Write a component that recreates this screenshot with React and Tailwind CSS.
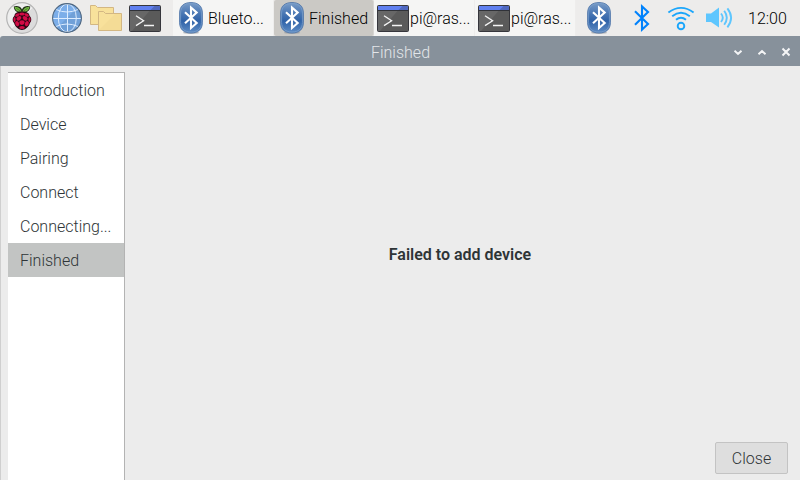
const font = 'font-[Roboto,"Liberation_Sans",sans-serif]';

function Raspberry() {
  return (
    <svg width="32" height="32" viewBox="0 0 32 32" className="block shrink-0">
      <defs>
        <linearGradient id="disc" x1="0" y1="0" x2="1" y2="1">
          <stop offset="0.5" stopColor="#eeeeee" />
          <stop offset="0.5" stopColor="#dcdcdc" />
        </linearGradient>
      </defs>
      <circle cx="16" cy="16" r="15.3" fill="url(#disc)" stroke="#b4b4b4" strokeWidth="1.2" />
      <path d="M7.8 4.6C10.5 3.4 14.5 4.2 16 7.4C17.5 4.2 21.5 3.4 24.2 4.6C24 8 22.2 11 16 11C9.8 11 8 8 7.8 4.6Z" fill="#1d2b14" />
      <path d="M8.5 5.1C11.3 4.4 14.6 5.6 15.6 9.8C11.8 10.6 9.1 8.6 8.5 5.1Z" fill="#72b944" />
      <path d="M23.5 5.1C20.7 4.4 17.4 5.6 16.4 9.8C20.2 10.6 22.9 8.6 23.5 5.1Z" fill="#72b944" />
      <path d="M10.4 6.4L14.6 9.2M21.6 6.4L17.4 9.2" stroke="#2d5a18" strokeWidth="0.6" />
      <path d="M16 9.6C20 9.2 23.4 11 23.6 14C25.8 15.5 25.8 19.5 23.9 21C23.4 24.5 19 28 16 28C13 28 8.6 24.5 8.1 21C6.2 19.5 6.2 15.5 8.4 14C8.6 11 12 9.2 16 9.6Z" fill="#2a0612" />
      <g fill="#d30c46">
        <ellipse cx="16" cy="11.9" rx="2.8" ry="1.5" />
        <ellipse cx="11.3" cy="13" rx="2.3" ry="1.5" transform="rotate(-30 11.3 13)" />
        <ellipse cx="20.7" cy="13" rx="2.3" ry="1.5" transform="rotate(30 20.7 13)" />
        <ellipse cx="12.9" cy="16.3" rx="2.7" ry="2" transform="rotate(-35 12.9 16.3)" />
        <ellipse cx="19.1" cy="16.3" rx="2.7" ry="2" transform="rotate(35 19.1 16.3)" />
        <ellipse cx="8.5" cy="17.6" rx="1.1" ry="2.5" />
        <ellipse cx="23.5" cy="17.6" rx="1.1" ry="2.5" />
        <ellipse cx="16" cy="20.6" rx="2.6" ry="2.3" />
        <ellipse cx="11.2" cy="21.6" rx="1.9" ry="2.6" transform="rotate(-25 11.2 21.6)" />
        <ellipse cx="20.8" cy="21.6" rx="1.9" ry="2.6" transform="rotate(25 20.8 21.6)" />
        <ellipse cx="16" cy="25.5" rx="2.8" ry="1.6" />
      </g>
    </svg>
  );
}

function Globe() {
  return (
    <svg width="30" height="30" viewBox="0 0 30 30" className="block shrink-0">
      <circle cx="15" cy="15" r="14.4" fill="#7caee9" />
      <path d="M25.2 4.8A14.4 14.4 0 0 1 4.8 25.2Z" fill="#70a0d8" />
      <g fill="none" stroke="#dcecff" strokeWidth="1">
        <path d="M15.5 1V29M1 15.5H29M4 6.5Q15 11.5 26 6.5M4 23.5Q15 18.5 26 23.5" />
        <ellipse cx="15.3" cy="15" rx="9" ry="14" />
      </g>
      <circle cx="15" cy="15" r="14.4" fill="none" stroke="#50677f" strokeWidth="1.1" />
    </svg>
  );
}

function Folders() {
  return (
    <svg width="32" height="26" viewBox="0 0 32 26" className="block shrink-0">
      <g fill="#f8e19b" stroke="#d3b783">
        <path d="M0.5 19.5V0.5H5.5L7.5 2.5H23.5V19.5Z" />
        <path d="M8.5 25.5V6.5H13.5L15.5 8.5H31.5V25.5Z" />
      </g>
      <path d="M9 25L25 9H31V25Z" fill="#f4dc96" />
    </svg>
  );
}

function Terminal() {
  return (
    <svg width="32" height="28" viewBox="0 0 32 28" className="block shrink-0">
      <g transform="translate(0 1)">
        <rect x="0.5" y="0.5" width="31" height="26" rx="1" fill="#5a5a5a" />
        <path d="M1 26V6H20.5L3 26Z" fill="#676767" />
        <path d="M1 1H31V5H1Z" fill="#4f68c0" />
        <path d="M1 1H25.5L21.5 5H1Z" fill="#6080f0" />
        <path d="M1 5.5H31" stroke="#303238" />
        <rect x="0.5" y="0.5" width="31" height="26" rx="1" fill="none" stroke="#36363c" />
        <path d="M7 10.8L14.6 15.7L7 20.6M15 20.5H25" fill="none" stroke="#f4f4f4" strokeWidth="1.3" />
      </g>
    </svg>
  );
}

function BluetoothBadge() {
  return (
    <svg width="24" height="32" viewBox="0 0 24 32" className="block shrink-0">
      <defs>
        <linearGradient id="badge" x1="0" y1="0" x2="0" y2="1">
          <stop offset="0" stopColor="#7b9cc6" />
          <stop offset="0.35" stopColor="#4a78b5" />
          <stop offset="0.6" stopColor="#2f62a8" />
          <stop offset="1" stopColor="#5f8dc5" />
        </linearGradient>
      </defs>
      <ellipse cx="12" cy="30.7" rx="8" ry="1.3" fill="#8a8f96" opacity="0.6" />
      <path d="M12 0.5C19 0.5 23.4 4 23.4 11V20.5C23.4 27.5 19 31 12 31C5 31 0.6 27.5 0.6 20.5V11C0.6 4 5 0.5 12 0.5Z" fill="url(#badge)" stroke="#4a71a6" strokeWidth="0.8" />
      <path d="M12 1.5C18.4 1.5 22.4 4.7 22.4 11V20.5C22.4 26.8 18.4 30 12 30C5.6 30 1.6 26.8 1.6 20.5V11C1.6 4.7 5.6 1.5 12 1.5Z" fill="none" stroke="#7b9fcb" strokeWidth="0.8" />
      <path d="M6 10.3L17.7 21L12 26V5.5L17.7 10.6L6 21.3" fill="none" stroke="#fff" strokeWidth="2.1" />
    </svg>
  );
}

function Bluetooth() {
  return (
    <svg width="16" height="28" viewBox="0 0 16 28" className="block shrink-0">
      <path d="M1 7.3L14 20L8 25.5V2.5L14 8L1 20.7" fill="none" stroke="#0082fc" strokeWidth="2.1" />
    </svg>
  );
}

function Wifi() {
  return (
    <svg width="28" height="26" viewBox="0 0 28 26" className="block shrink-0">
      <g fill="none" stroke="#1ba6fb" strokeWidth="1.9">
        <path d="M1.4 6.6Q14 -2.8 26.6 6.6M5.2 10.3Q14 3.3 22.8 10.3M9 13.8Q14 9.6 19 13.8" />
        <circle cx="14" cy="20" r="3.3" />
      </g>
    </svg>
  );
}

function Volume() {
  return (
    <svg width="28" height="22" viewBox="0 0 28 22" className="block shrink-0">
      <path d="M0 6.5H5L13 0.5V20.5L5 15H0Z" fill="#5ec6fe" />
      <g fill="none" stroke="#5ec6fe" strokeWidth="1.9">
        <path d="M15 6.5Q18.6 10.8 15 15M18.2 3.8Q23.4 10.8 18.2 17.7M21.4 1.3Q28.8 10.8 21.4 20.3" />
      </g>
    </svg>
  );
}

function Task({ icon, label, active, wide }) {
  return (
    <div className={`flex h-9 shrink-0 items-center border-r ${wide ? "w-[101px]" : "w-[100px]"} ${active ? "rounded-xs border-[#d8d6d3] bg-[#cbc9c5]" : "border-[#eeedec] bg-[#f5f5f4]"} ${icon === "bt" ? "gap-[5px] pl-1.5" : "gap-px pl-[3px]"}`}>
      {icon === "bt" ? <BluetoothBadge /> : <Terminal />}
      <span className="pt-0.5 whitespace-nowrap">{label}</span>
    </div>
  );
}

const steps = ["Introduction", "Device", "Pairing", "Connect", "Connecting...", "Finished"];

export default function App() {
  return (
    <div className={`flex h-[480px] w-[800px] flex-col overflow-hidden bg-[#ececec] text-base leading-5 font-light ${font}`}>
      <div className="flex h-9 shrink-0 items-center bg-[#edeceb] pl-1.5 text-black">
        <Raspberry />
        <div className="ml-3.5"><Globe /></div>
        <div className="ml-2"><Folders /></div>
        <div className="ml-[7px]"><Terminal /></div>
        <div className="ml-3 flex">
          <Task icon="bt" label="Blueto..." wide />
          <Task icon="bt" label="Finished" active />
          <Task icon="term" label="pi@ras..." wide />
          <Task icon="term" label="pi@ras..." wide />
        </div>
        <div className="ml-[11px]"><BluetoothBadge /></div>
        <div className="ml-[23px]"><Bluetooth /></div>
        <div className="ml-[17px] pt-0.5"><Wifi /></div>
        <div className="ml-[11px]"><Volume /></div>
        <span className="ml-[14px] pt-0.5">12:00</span>
      </div>

      <div className="flex h-[30px] shrink-0 items-center rounded-tl-[3px] bg-[#87919b] pr-2 pl-[67px] text-[#e3e6e9]">
        <span className="grow pt-1 text-center">Finished</span>
        <svg width="58" height="12" viewBox="0 0 58 12" className="mt-1 block shrink-0" fill="none" stroke="#f4f5f6" strokeWidth="2">
          <path d="M0.5 3.7L4 7L7.5 3.7M24.5 7.3L28 4L31.5 7.3M48.5 1.5L55.5 8.5M55.5 1.5L48.5 8.5" />
        </svg>
      </div>

      <div className="flex min-h-0 grow border-l border-[#cfcfcf] pt-1.5 pl-[7px] text-[#2e3436]">
        <div className="w-[117px] shrink-0 border-t border-r border-[#b3b3b3] bg-white">
          {steps.map((s) => (
            <div key={s} className={`flex h-[34px] items-center pt-0.5 pl-3 ${s === "Finished" ? "bg-[#c2c4c3]" : ""}`}>{s}</div>
          ))}
        </div>
        <div className="flex grow flex-col pr-3 pb-1.5">
          <div className="flex grow items-center justify-center pb-[5px] pl-[7px] font-semibold">Failed to add device</div>
          <button className="flex h-8 w-[73px] items-center justify-center self-end rounded-xs border border-[#c3c3c3] bg-[#dedede] pt-0.5">Close</button>
        </div>
      </div>
    </div>
  );
}
